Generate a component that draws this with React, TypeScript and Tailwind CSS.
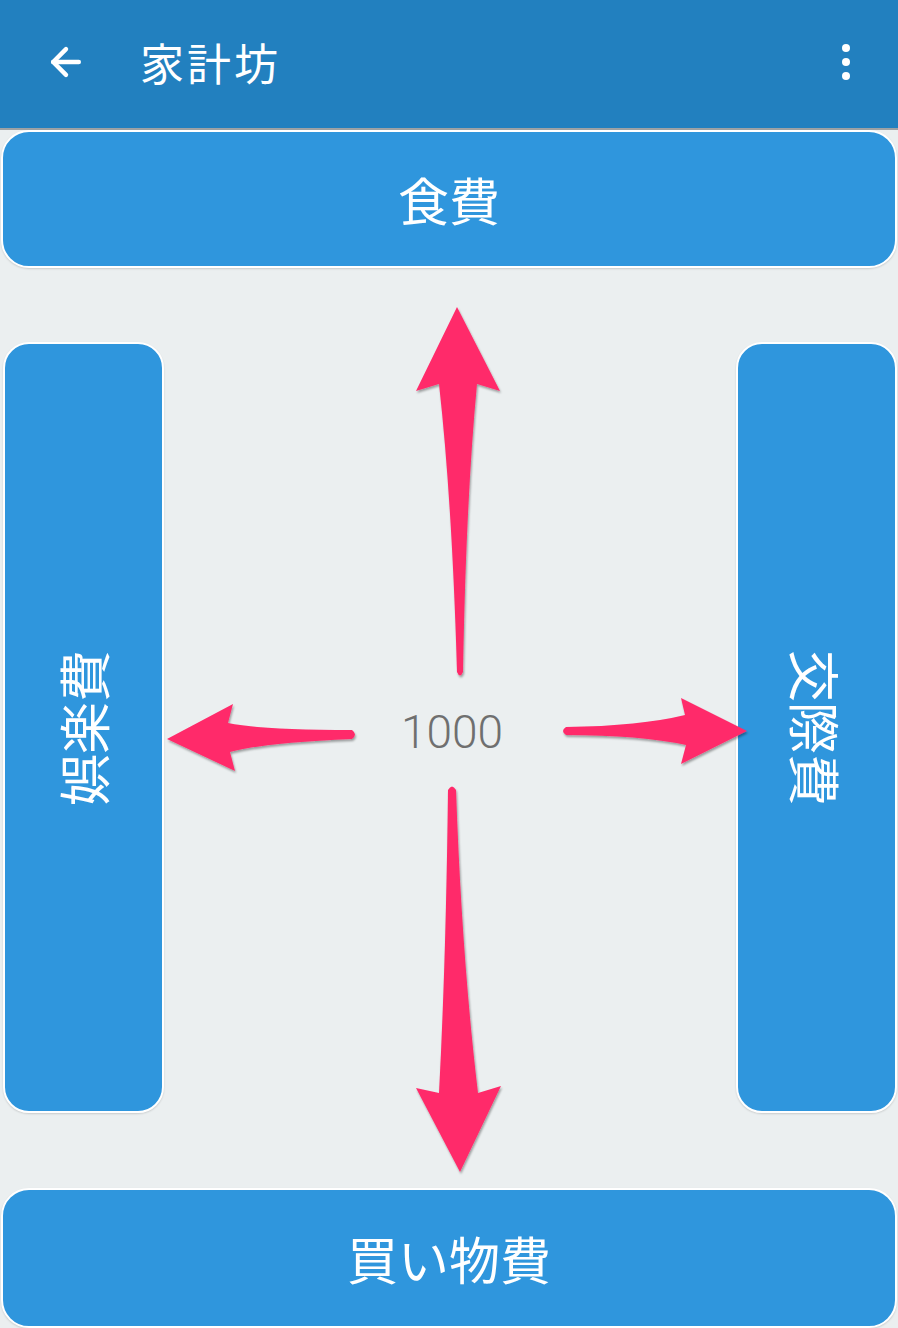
import { ArrowLeft } from 'lucide-react';

const JP = { fontFamily: '"Noto Sans CJK JP", "Noto Sans", sans-serif' };

function CategoryBar({ label }: { label: string }) {
  return (
    <button
      className="h-full w-full rounded-[28px] border-2 border-white bg-[#2f96dd] text-white text-[51px] leading-none shadow-[0_1px_2px_rgba(0,0,0,0.15)] flex items-center justify-center"
      style={JP}
    >
      {label}
    </button>
  );
}

function SidePanel({ label, dir }: { label: string; dir: 'left' | 'right' }) {
  return (
    <div className="h-full rounded-[26px] border-2 border-white bg-[#2f96dd] shadow-[0_1px_2px_rgba(0,0,0,0.15)] flex items-center justify-center overflow-hidden">
      <span
        className={`whitespace-nowrap text-white text-[52px] leading-none ${dir === 'left' ? '-rotate-90' : 'rotate-90'}`}
        style={JP}
      >
        {label}
      </span>
    </div>
  );
}

// swipe hint arrows drawn over the board
function SwipeArrows() {
  return (
    <svg className="absolute inset-0 pointer-events-none" width="898" height="1328" viewBox="0 0 898 1328">
      <defs>
        <filter id="arrowShadow" x="-20%" y="-20%" width="140%" height="140%">
          <feDropShadow dx="1" dy="2" stdDeviation="1.2" floodColor="#000" floodOpacity="0.35" />
        </filter>
      </defs>
      <g fill="#ff2b6b" filter="url(#arrowShadow)">
        {/* up */}
        <path d="M457 307 L500 391 L477 384 Q466 500 463 672 Q460 679 457 672 Q452 500 439 384 L416 391 Z" />
        {/* down */}
        <path d="M448 790 Q452 783 456 790 Q462 960 478 1093 L501 1086 L460 1172 L416 1088 L439 1093 Q446 960 448 790 Z" />
        {/* left */}
        <path d="M167 739 L233 704 L228 723 Q262 730 352 730 Q358 734.5 352 739 Q262 743 230 752 L235 771 Z" />
        {/* right */}
        <path d="M747 731 L681 764 L686 745 Q640 735 566 735 Q560 731 566 727 Q640 726 685 715 L681 698 Z" />
      </g>
    </svg>
  );
}

export default function App() {
  return (
    <div className="relative w-[898px] h-[1328px] bg-[#ebeff0] overflow-hidden flex flex-col">
      {/* App bar */}
      <header className="h-[130px] shrink-0 bg-[#2280bf] border-b-2 border-[#9da2a5] flex items-center pl-[44px] pr-[48px] pb-[4px]">
        <ArrowLeft className="w-[44px] h-[44px] text-white" strokeWidth={2.4} />
        <h1 className="ml-[52px] text-white text-[44px] leading-none tracking-[3px]" style={JP}>
          家計坊
        </h1>
        <div className="ml-auto flex flex-col items-center gap-[6px]">
          <span className="w-[8px] h-[8px] rounded-full bg-white" />
          <span className="w-[8px] h-[8px] rounded-full bg-white" />
          <span className="w-[8px] h-[8px] rounded-full bg-white" />
        </div>
      </header>

      {/* Board */}
      <div className="px-[1px] h-[138px] shrink-0">
        <CategoryBar label="食費" />
      </div>

      <div className="mt-[74px] h-[771px] shrink-0 flex pl-[3px] pr-[1px]">
        <div className="w-[161px] h-full">
          <SidePanel label="娯楽費" dir="left" />
        </div>
        <div className="flex-1 flex items-center justify-center pt-[9px] pl-[4px]">
          <span className="text-[46px] font-light text-[#6f6f6f] leading-none" style={{ fontFamily: 'Roboto, sans-serif' }}>
            1000
          </span>
        </div>
        <div className="w-[161px] h-full">
          <SidePanel label="交際費" dir="right" />
        </div>
      </div>

      <div className="mt-[75px] px-[1px] h-[140px] shrink-0">
        <CategoryBar label="買い物費" />
      </div>

      <SwipeArrows />
    </div>
  );
}
